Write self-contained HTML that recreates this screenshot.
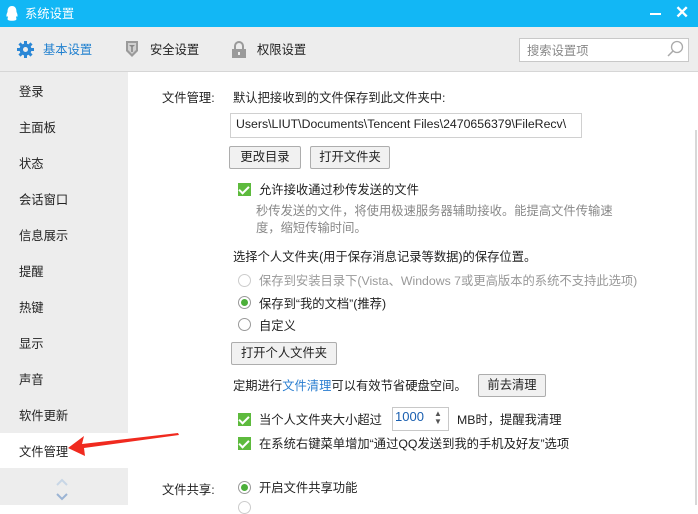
<!DOCTYPE html>
<html><head><meta charset="utf-8"><style>
*{margin:0;padding:0;box-sizing:border-box}
body{width:698px;height:505px;overflow:hidden;position:relative;background:#fff;font-family:"Liberation Sans","Noto Sans CJK SC",sans-serif;font-size:12.3px;color:#222}
.a{position:absolute;white-space:nowrap}
.title{left:0;top:0;width:698px;height:27px;background:#12b7f5}
.tb{left:0;top:27px;width:698px;height:45px;background:#ededed;border-bottom:1px solid #d6d6d6}
.side{left:0;top:72px;width:128px;height:433px;background:#ededed}
.si{left:19px;color:#222}
.btn{position:absolute;height:23px;border:1px solid #adadad;border-radius:2px;background:#f1f1f1;text-align:center;line-height:21px;color:#222}
.cb{position:absolute;width:13px;height:13px;background:#5dba3d}
.cb:after{content:"";position:absolute;left:3px;top:1px;width:4px;height:8px;border:solid #fff;border-width:0 2px 2px 0;transform:rotate(45deg)}
.rd{position:absolute;width:13px;height:13px;border:1px solid #999;border-radius:50%;background:#fff}
.rd.on:after{content:"";position:absolute;left:2px;top:2px;width:7px;height:7px;border-radius:50%;background:#4caf3a}
.rd.dis{border-color:#ccc}
.g{color:#888}
</style></head><body>
<div class="a title"></div>
<svg class="a" style="left:5px;top:5px" width="14" height="17" viewBox="0 0 14 17"><path d="M7 1C3.5 1 2.5 4 2.5 7C1.5 9 1 11 2 12C2.5 11.5 3 11 3 11C3 13 2 14 3 15C5 16 9 16 11 15C12 14 11 13 11 11C11 11 11.5 11.5 12 12C13 11 12.5 9 11.5 7C11.5 4 10.5 1 7 1Z" fill="#fff"/></svg>
<div class="a" style="left:25px;top:4px;color:#fff">系统设置</div>
<div class="a" style="left:650px;top:13px;width:11px;height:2px;background:#fff"></div>
<div class="a" style="left:675px;top:3px;color:#fff;font-size:17px;font-weight:bold">✕</div>
<div class="a tb"></div>
<svg class="a" style="left:17px;top:41px" width="17" height="17" viewBox="0 0 17 17"><g fill="#2a87d6"><circle cx="8.5" cy="8.5" r="6"/><rect x="7" y="0" width="3" height="17"/><rect x="0" y="7" width="17" height="3"/><rect x="7" y="0" width="3" height="17" transform="rotate(45 8.5 8.5)"/><rect x="7" y="0" width="3" height="17" transform="rotate(-45 8.5 8.5)"/></g><circle cx="8.5" cy="8.5" r="2.5" fill="#ededed"/></svg>
<div class="a" style="left:43px;top:40px;color:#1e7fcf">基本设置</div>
<svg class="a" style="left:125px;top:40px" width="14" height="18" viewBox="0 0 14 18"><path d="M1 1H13V11L7 17L1 11Z" fill="#9a9a9a"/><path d="M3 3H11V10L7 14L3 10Z" fill="#d0d0d0"/><path d="M4 5H10L7.8 7V12H6.2V7Z" fill="#888"/></svg>
<div class="a" style="left:150px;top:40px">安全设置</div>
<svg class="a" style="left:231px;top:41px" width="16" height="17" viewBox="0 0 16 17"><path d="M4 8V5a4 4 0 0 1 8 0V8" fill="none" stroke="#9a9a9a" stroke-width="2"/><rect x="1" y="8" width="14" height="9" fill="#9a9a9a"/><rect x="7" y="11" width="2" height="3" fill="#eee"/></svg>
<div class="a" style="left:257px;top:40px">权限设置</div>
<div class="a" style="left:519px;top:38px;width:170px;height:24px;border:1px solid #c8c8c8;background:#fff"></div>
<div class="a" style="left:527px;top:41px;color:#888">搜索设置项</div>
<svg class="a" style="left:666px;top:40px" width="18" height="18" viewBox="0 0 18 18"><circle cx="11" cy="7" r="5.5" fill="none" stroke="#aaa" stroke-width="1.3"/><path d="M7 11L2 16" stroke="#aaa" stroke-width="1.5"/></svg>
<div class="a side"></div>
<div class="a si" style="top:82px">登录</div>
<div class="a si" style="top:118px">主面板</div>
<div class="a si" style="top:154px">状态</div>
<div class="a si" style="top:190px">会话窗口</div>
<div class="a si" style="top:226px">信息展示</div>
<div class="a si" style="top:262px">提醒</div>
<div class="a si" style="top:298px">热键</div>
<div class="a si" style="top:334px">显示</div>
<div class="a si" style="top:370px">声音</div>
<div class="a si" style="top:406px">软件更新</div>
<div class="a" style="left:0;top:433px;width:128px;height:35px;background:#fff"></div>
<div class="a si" style="top:442px">文件管理</div>
<svg class="a" style="left:55px;top:475px" width="14" height="28" viewBox="0 0 14 28"><path d="M2 10L7 5L12 10" fill="none" stroke="#c8d6e6" stroke-width="2"/><path d="M2 19L7 24L12 19" fill="none" stroke="#9bb4d4" stroke-width="2"/></svg>
<svg class="a" style="left:68px;top:430px" width="112" height="28" viewBox="0 0 112 28"><path d="M0 18L16 6L14 14L110 3L111 5L16 18L17 26Z" fill="#f02a1f"/></svg>
<div class="a" style="left:695px;top:130px;width:2px;height:375px;background:#d8d8d8"></div>
<div class="a" style="left:162px;top:88px">文件管理:</div>
<div class="a" style="left:233px;top:88px">默认把接收到的文件保存到此文件夹中:</div>
<div class="a" style="left:230px;top:113px;width:352px;height:25px;border:1px solid #d0d0d0;background:#fff;overflow:hidden;padding:3px 0 0 5px">Users\LIUT\Documents\Tencent Files\2470656379\FileRecv\</div>
<div class="btn" style="left:229px;top:146px;width:72px">更改目录</div>
<div class="btn" style="left:310px;top:146px;width:80px">打开文件夹</div>
<div class="cb" style="left:238px;top:183px"></div>
<div class="a" style="left:259px;top:180px">允许接收通过秒传发送的文件</div>
<div class="a g" style="left:256px;top:201px">秒传发送的文件，将使用极速服务器辅助接收。能提高文件传输速</div>
<div class="a g" style="left:256px;top:218px">度，缩短传输时间。</div>
<div class="a" style="left:233px;top:247px">选择个人文件夹(用于保存消息记录等数据)的保存位置。</div>
<div class="rd dis" style="left:238px;top:274px"></div>
<div class="a" style="left:259px;top:271px;color:#999">保存到安装目录下(Vista、Windows 7或更高版本的系统不支持此选项)</div>
<div class="rd on" style="left:238px;top:296px"></div>
<div class="a" style="left:259px;top:294px">保存到“我的文档”(推荐)</div>
<div class="rd" style="left:238px;top:318px"></div>
<div class="a" style="left:259px;top:316px">自定义</div>
<div class="btn" style="left:231px;top:342px;width:106px">打开个人文件夹</div>
<div class="a" style="left:233px;top:376px">定期进行<span style="color:#2a7ed0">文件清理</span>可以有效节省硬盘空间。</div>
<div class="btn" style="left:478px;top:374px;width:68px">前去清理</div>
<div class="cb" style="left:238px;top:413px"></div>
<div class="a" style="left:259px;top:410px">当个人文件夹大小超过</div>
<div class="a" style="left:392px;top:407px;width:57px;height:24px;border:1px solid #c8c8c8;background:#fff"></div>
<div class="a" style="left:395px;top:409px;color:#1a5fb0;font-size:13px">1000</div>
<div class="a" style="left:434px;top:410px;font-size:8px;color:#555;line-height:8px">▲<br>▼</div>
<div class="a" style="left:457px;top:410px">MB时，提醒我清理</div>
<div class="cb" style="left:238px;top:437px"></div>
<div class="a" style="left:259px;top:434px">在系统右键菜单增加“通过QQ发送到我的手机及好友”选项</div>
<div class="a" style="left:162px;top:480px">文件共享:</div>
<div class="rd on" style="left:238px;top:481px"></div>
<div class="a" style="left:259px;top:478px">开启文件共享功能</div>
<div class="rd dis" style="left:238px;top:501px"></div>
</body></html>
